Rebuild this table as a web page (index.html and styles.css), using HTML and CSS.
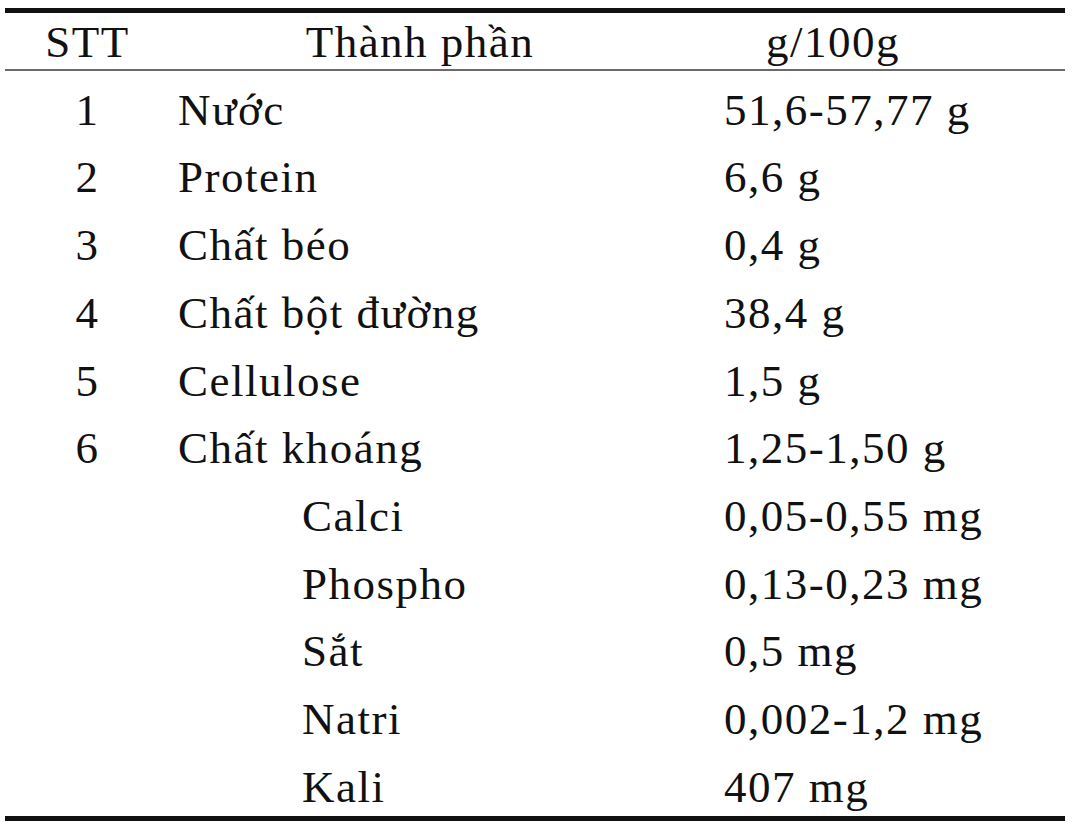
FILE: index.html
```html
<!DOCTYPE html>
<html lang="vi">
<head>
<meta charset="utf-8">
<title>Thành phần dinh dưỡng</title>
<link rel="stylesheet" href="styles.css">
</head>
<body>
<table class="nutri">
  <colgroup>
    <col class="c-stt">
    <col class="c-name">
    <col class="c-val">
  </colgroup>
  <thead>
    <tr>
      <th class="h-stt">STT</th>
      <th class="h-name">Thành phần</th>
      <th class="h-val">g/100g</th>
    </tr>
  </thead>
  <tbody>
    <tr><td class="stt">1</td><td class="name">Nước</td><td class="val">51,6-57,77 g</td></tr>
    <tr><td class="stt">2</td><td class="name">Protein</td><td class="val">6,6 g</td></tr>
    <tr><td class="stt">3</td><td class="name">Chất béo</td><td class="val">0,4 g</td></tr>
    <tr><td class="stt">4</td><td class="name">Chất bột đường</td><td class="val">38,4 g</td></tr>
    <tr><td class="stt">5</td><td class="name">Cellulose</td><td class="val">1,5 g</td></tr>
    <tr><td class="stt">6</td><td class="name">Chất khoáng</td><td class="val">1,25-1,50 g</td></tr>
    <tr><td class="stt"></td><td class="name sub">Calci</td><td class="val">0,05-0,55 mg</td></tr>
    <tr><td class="stt"></td><td class="name sub">Phospho</td><td class="val">0,13-0,23 mg</td></tr>
    <tr><td class="stt"></td><td class="name sub">Sắt</td><td class="val">0,5 mg</td></tr>
    <tr><td class="stt"></td><td class="name sub">Natri</td><td class="val">0,002-1,2 mg</td></tr>
    <tr><td class="stt"></td><td class="name sub">Kali</td><td class="val">407 mg</td></tr>
  </tbody>
</table>
</body>
</html>
```
FILE: styles.css
```css
html, body {
  margin: 0;
  padding: 0;
  background: #ffffff;
}

body {
  font-family: "Liberation Serif", "Times New Roman", serif;
  font-size: 45px;
  color: #111111;
}

.nutri {
  margin: 8px 0 0 5px;
  width: 1060px;
  table-layout: fixed;
  border-collapse: separate;
  border-spacing: 0;
  border-top: 5px solid #111111;
  border-bottom: 5px solid #111111;
  letter-spacing: 1.5px;
}

.c-stt { width: 165px; }
.c-name { width: 492px; }
.c-val { width: 403px; }

.nutri th {
  font-weight: normal;
  padding: 3.8px 0 2.2px 0;
  line-height: 50px;
  border-bottom: 2px solid #6a6a6a;
  white-space: nowrap;
}

.h-stt { text-align: center; }
.h-name { text-align: center; padding-left: 8px !important; }
.h-val { text-align: center; padding-right: 61px !important; }

.nutri td {
  padding: 13.8px 0 3.9px 0;
  line-height: 50px;
  white-space: nowrap;
  vertical-align: top;
}

.stt { text-align: center; }
.nutri .name { padding-left: 8px; text-align: left; }
.nutri .name.sub { padding-left: 132px; }
.nutri .val { padding-left: 62px; text-align: left; }
```
